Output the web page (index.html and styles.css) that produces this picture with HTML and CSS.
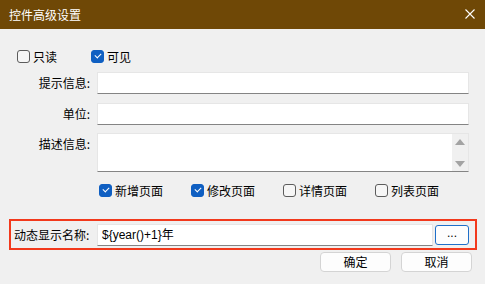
FILE: index.html
```html
<!DOCTYPE html>
<html lang="zh-CN">
<head>
  <meta charset="UTF-8" />
  <title>控件高级设置</title>
  <link rel="stylesheet" href="styles.css">
</head>
<body>

  <div class="dialog">
    <!-- タイトル -->
    <div class="title-bar">
      <span class="title-text">控件高级设置</span>
      <svg class="close-icon" width="10" height="10" viewBox="0 0 10 10">
        <path d="M0.5 0.5 L9.5 9.5 M9.5 0.5 L0.5 9.5" stroke="#fff" stroke-width="1.1" fill="none" />
      </svg>
    </div>

    <!-- 本文 -->
    <div class="dialog-body">
      <div class="check-row top-checks">
        <label class="check"><span class="box"></span>只读</label>
        <label class="check"><span class="box checked"></span>可见</label>
      </div>

      <div class="field-row">
        <div class="field-label">提示信息:</div>
        <div class="text-input"></div>
      </div>

      <div class="field-row">
        <div class="field-label">单位:</div>
        <div class="text-input"></div>
      </div>

      <div class="field-row area-row">
        <div class="field-label">描述信息:</div>
        <div class="text-area">
          <div class="area-text"></div>
          <div class="scrollbar">
            <span class="arrow-up"></span>
            <span class="arrow-down"></span>
          </div>
        </div>
      </div>

      <div class="check-row page-checks">
        <label class="check"><span class="box checked"></span>新增页面</label>
        <label class="check"><span class="box checked"></span>修改页面</label>
        <label class="check"><span class="box"></span>详情页面</label>
        <label class="check"><span class="box"></span>列表页面</label>
      </div>

      <div class="dynamic-row">
        <div class="dynamic-label">动态显示名称:</div>
        <div class="text-input dynamic-input">${year()+1}年</div>
        <button class="more-button">...</button>
      </div>

      <div class="button-row">
        <button class="dlg-button">确定</button>
        <button class="dlg-button">取消</button>
      </div>
    </div>
  </div>

</body>
</html>
```

FILE: styles.css
```css
body {
  margin: 0;
  background-color: #f0f0f0;
  font-family: "Noto Sans CJK SC", "Microsoft YaHei", sans-serif;
  font-size: 12px;
  color: #000;
}

.dialog {
  width: 485px;
  height: 284px;
  background-color: #f0f0f0;
  overflow: hidden;
}

.title-bar {
  height: 29px;
  background-color: #6f4806;
  display: flex;
  justify-content: space-between;
  align-items: center;
  padding: 0 10px 0 9px;
  box-sizing: border-box;
}

.title-text {
  color: #fff;
  font-size: 12px;
  line-height: 14px;
}

.close-icon {
  display: block;
  margin-top: -2px;
}

.dialog-body {
  display: flex;
  flex-direction: column;
}

.check-row {
  display: flex;
  align-items: center;
  height: 15px;
}

.top-checks {
  margin-top: 20px;
  padding-left: 17px;
  gap: 34px;
}

.page-checks {
  margin-top: 11px;
  padding-left: 99px;
}

.page-checks .check {
  width: 92px;
}

.check {
  display: flex;
  align-items: center;
  gap: 3px;
  line-height: 15px;
}

.box {
  width: 11px;
  height: 11px;
  border: 1px solid #5c5c5c;
  border-radius: 3px;
  background-color: #f6f6f6;
  position: relative;
}

.box.checked {
  background-color: #0f5fc2;
  border-color: #0f5fc2;
}

.box.checked::after {
  content: "";
  position: absolute;
  left: 3px;
  top: 2px;
  width: 5px;
  height: 3px;
  border-left: 1px solid #fff;
  border-bottom: 1px solid #fff;
  transform: rotate(-45deg);
}

.field-row {
  display: flex;
  align-items: center;
  margin-top: 8px;
  padding-right: 16px;
}

.top-checks + .field-row {
  margin-top: 8px;
}

.field-row + .field-row {
  margin-top: 9px;
}

.field-label {
  width: 90px;
  text-align: right;
  padding-right: 7px;
  box-sizing: border-box;
  width: 97px;
  line-height: 22px;
  white-space: nowrap;
}

.text-input {
  flex: 1;
  height: 22px;
  background-color: #fff;
  border: 1px solid #e6e6e6;
  border-bottom-color: #848484;
  box-sizing: border-box;
  padding-left: 4px;
  line-height: 20px;
}

.area-row {
  align-items: flex-start;
}

.area-row.field-row {
  margin-top: 8px;
}

.text-area {
  flex: 1;
  height: 39px;
  display: flex;
  background-color: #fff;
  border: 1px solid #e6e6e6;
  border-bottom-color: #848484;
  box-sizing: border-box;
}

.area-text {
  flex: 1;
}

.scrollbar {
  width: 16px;
  background-color: #f0f0f0;
  display: flex;
  flex-direction: column;
  justify-content: space-between;
  align-items: center;
  padding: 5px 0 4px;
  box-sizing: border-box;
}

.arrow-up {
  width: 0;
  height: 0;
  border-left: 5px solid transparent;
  border-right: 5px solid transparent;
  border-bottom: 6px solid #a3a3a3;
}

.arrow-down {
  width: 0;
  height: 0;
  border-left: 5px solid transparent;
  border-right: 5px solid transparent;
  border-top: 6px solid #a3a3a3;
}

.dynamic-row {
  margin: 21px 8px 0 9px;
  border: 2px solid #f2391c;
  display: flex;
  align-items: center;
  padding: 3px 6px 2px 3px;
}

.dynamic-label {
  width: 83px;
  line-height: 22px;
  white-space: nowrap;
}

.dynamic-input {
  font-family: "Liberation Sans", "Noto Sans CJK SC", sans-serif;
  font-size: 12px;
}

.more-button {
  width: 34px;
  height: 20px;
  margin-left: 2px;
  background-color: #fdfdfd;
  border: 1px solid #1f6fc9;
  border-radius: 3px;
  font-family: "Liberation Sans", sans-serif;
  font-size: 12px;
  line-height: 12px;
  padding: 0 0 4px;
}

.button-row {
  display: flex;
  justify-content: flex-end;
  gap: 10px;
  margin-top: 2px;
  padding-right: 13px;
}

.dlg-button {
  width: 71px;
  height: 20px;
  background-color: #fdfdfd;
  border: 1px solid #d4d4d4;
  border-radius: 4px;
  font-family: "Noto Sans CJK SC", sans-serif;
  font-size: 12px;
  line-height: 16px;
  padding: 0;
}
```
